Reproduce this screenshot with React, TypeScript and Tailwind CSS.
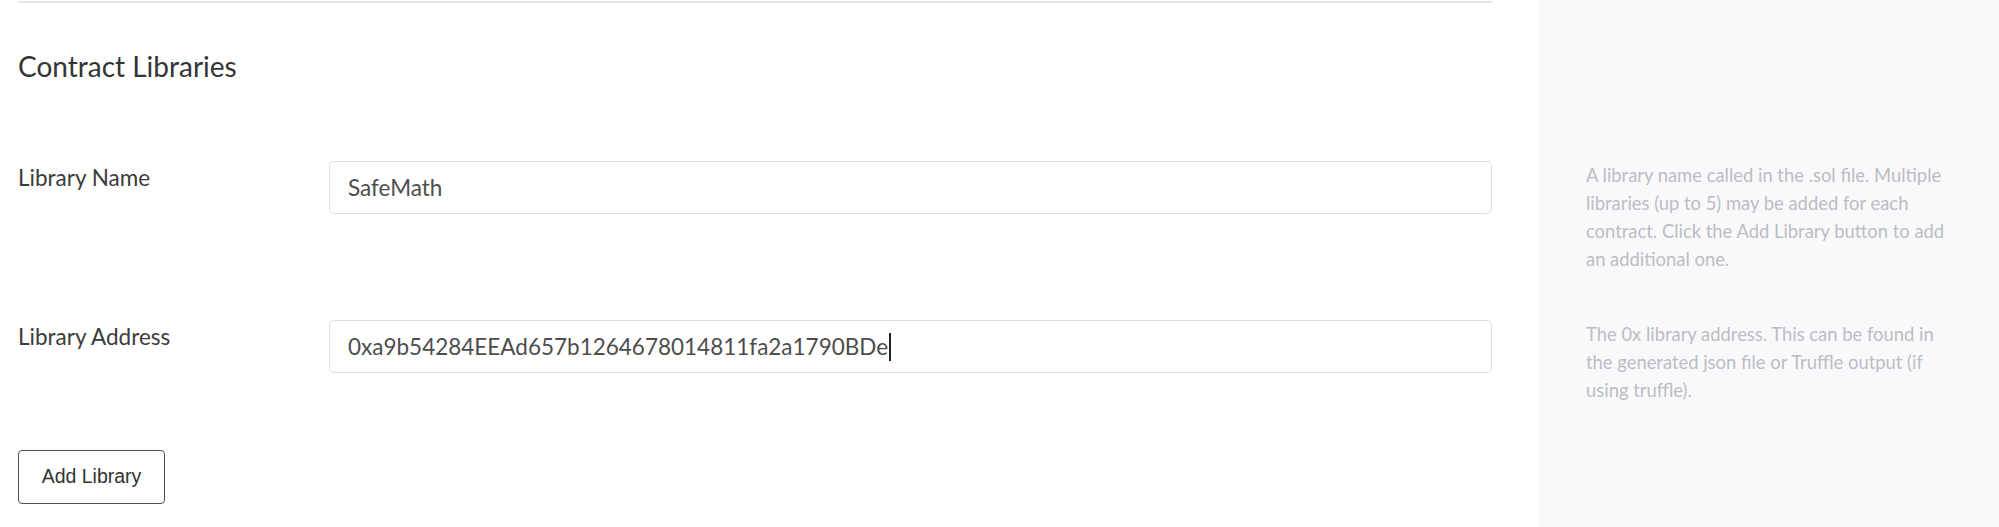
import React from 'react';

const font = { fontFamily: 'Lato, "Open Sans", sans-serif' };

type FieldProps = { label: string; value: string; caret?: boolean };

const Field: React.FC<FieldProps> = ({ label, value, caret }) => (
  <div className="flex items-start">
    <label className="w-[311px] shrink-0 pt-[2px] text-[22.5px] leading-[30px] text-[#3b3b3b]">
      {label}
    </label>
    <div className="flex h-[53px] flex-1 items-center rounded-[5px] border border-[#dcdee5] bg-white px-[18px] text-[22.5px] text-[#4d4d4d]">
      <span>{value}</span>
      {caret && <span className="ml-[1px] inline-block h-[28px] w-[2px] bg-[#222]" />}
    </div>
  </div>
);

export default function App() {
  return (
    <div className="flex min-h-[527px] w-full bg-white" style={font}>
      {/* main form column */}
      <div className="flex-1 pl-[18px] pr-[47px]">
        <div className="mt-[1px] h-[2px] bg-[#e6e7ec]" />

        <h2 className="mt-[44px] text-[28px] leading-[38px] text-[#353535]">Contract Libraries</h2>

        <div className="mt-[76px]">
          <Field label="Library Name" value="SafeMath" />
        </div>

        <div className="mt-[106px]">
          <Field label="Library Address" value="0xa9b54284EEAd657b1264678014811fa2a1790BDe" caret />
        </div>

        <button
          className="mt-[77px] h-[54px] w-[147px] rounded-[4px] border-[1.5px] border-[#505050] bg-white text-[19.5px] text-[#333]"
          style={{ fontFamily: '"Liberation Sans", Arial, sans-serif' }}
        >
          Add Library
        </button>
      </div>

      {/* help column */}
      <div className="w-[460px] shrink-0 bg-[#f9f9fb] pl-[47px] pt-[161px] text-[18.4px] leading-[28px] text-[#babdc5]">
        <p className="whitespace-nowrap">
          A library name called in the .sol file. Multiple
          <br />
          libraries (up to 5) may be added for each
          <br />
          contract. Click the Add Library button to add
          <br />
          an additional one.
        </p>
        <p className="mt-[47px] whitespace-nowrap">
          The 0x library address. This can be found in
          <br />
          the generated json file or Truffle output (if
          <br />
          using truffle).
        </p>
      </div>
    </div>
  );
}
